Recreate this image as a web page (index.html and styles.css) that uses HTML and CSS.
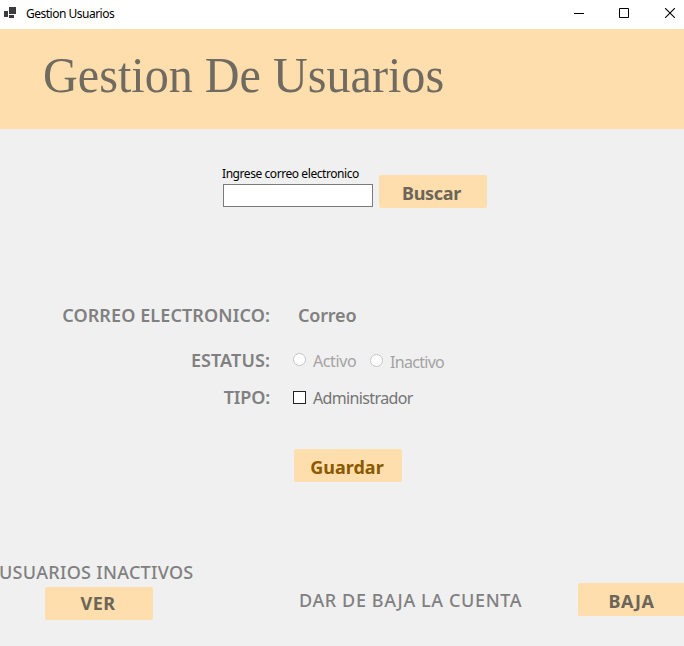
FILE: index.html
```html
<!DOCTYPE html>
<html lang="es">
<head>
<meta charset="utf-8">
<title>Gestion Usuarios</title>
<link rel="stylesheet" href="styles.css">
</head>
<body>
<div class="titlebar">
  <svg class="app-icon" width="14" height="12" viewBox="0 0 14 12" shape-rendering="crispEdges"><path fill="#3b3b3d" d="M0 4h4v6H0zM5 0h7v7H5zM5 8h5v3H5z"/></svg>
  <span class="window-name">Gestion Usuarios</span>
  <div class="controls">
    <svg width="10" height="10" viewBox="0 0 10 10"><path d="M0 5.5h10" stroke="#000"/></svg>
    <svg width="10" height="10" viewBox="0 0 10 10"><path d="M.5.5h9v9h-9z" fill="none" stroke="#000"/></svg>
    <svg class="close" width="10" height="10" viewBox="0 0 10 10"><path d="M0 0l10 10M10 0L0 10" stroke="#000" stroke-width="1.1"/></svg>
  </div>
</div>
<header class="banner"><h1>Gestion De Usuarios</h1></header>
<main>
  <form class="search">
    <label class="search-field"><span>Ingrese correo electronico</span><input type="text"></label>
    <button type="button" class="btn">Buscar</button>
  </form>
  <section class="details">
    <div class="row"><span class="key key-mail">CORREO ELECTRONICO:</span><span class="mail">Correo</span></div>
    <div class="row"><span class="key key-status">ESTATUS:</span>
      <div class="options"><span class="radio"></span><span class="off active">Activo</span><span class="radio second"></span><span class="off inactive">Inactivo</span></div>
    </div>
    <div class="row"><span class="key key-type">TIPO:</span>
      <div class="options"><span class="check"></span><span class="admin">Administrador</span></div>
    </div>
  </section>
  <button type="button" class="btn save">Guardar</button>
  <footer>
    <div class="inactive-users"><span class="caption users">USUARIOS INACTIVOS</span><button type="button" class="btn ver">VER</button></div>
    <div class="drop"><span class="caption account">DAR DE BAJA LA CUENTA</span><button type="button" class="btn baja">BAJA</button></div>
  </footer>
</main>
</body>
</html>
```
FILE: styles.css
```css
* { box-sizing: border-box; }
body { margin: 0; width: 684px; height: 646px; overflow: hidden; background: #f0f0f0; font-family: "Noto Sans", sans-serif; display: flex; flex-direction: column; }
.titlebar { height: 29px; background: #fff; display: flex; align-items: flex-start; padding: 0 9px 0 4px; }
.app-icon { margin-top: 7px; }
.window-name { font-size: 12px; line-height: 17px; margin: 5px 0 0 8px; color: #000; letter-spacing: -.5px; }
.controls { margin: 8px 0 0 auto; display: flex; gap: 35px; }
.controls svg { display: block; }
.controls .close { margin-left: 1px; }
.banner { height: 100px; background: #fddeac; padding: 17px 0 0 43px; }
h1 { margin: 0; font: 400 50px/58px "Liberation Serif", serif; color: #706b60; white-space: nowrap; transform: scaleX(.963); transform-origin: left; }
main { flex: 1; display: flex; flex-direction: column; }
.search { display: flex; align-items: flex-start; margin: 37px 0 0 222px; height: 50px; }
.search-field { width: 151px; font-size: 12px; line-height: 16px; display: flex; flex-direction: column; white-space: nowrap; letter-spacing: -.43px; }
.search-field input { margin: 2px 0 0 1px; width: 150px; height: 23px; border: 1px solid #7a7a7a; background: #fff; padding: 0; }
.btn { width: 108px; height: 33px; border: 0; border-radius: 2px; background: #fddeac; color: #6c6558; font: 700 18px/33px "Noto Sans", sans-serif; padding: 2px 0 0; white-space: nowrap; }
.search .btn { margin: 9px 0 0 6px; padding-right: 3px; letter-spacing: -.3px; }
.details { margin-top: 83px; display: flex; flex-direction: column; color: #808080; }
.row { display: grid; grid-template-columns: 270px 1fr; column-gap: 23px; height: 45px; line-height: 32px; }
.row:nth-child(2) { height: 37px; }
.row:nth-child(3) { height: 32px; }
.key { font-size: 18px; font-weight: 600; text-align: right; white-space: nowrap; }
.key-mail, .key-status { letter-spacing: .1px; }
.key-type { letter-spacing: -.15px; }
.mail { font-size: 18px; font-weight: 600; margin-left: 5px; letter-spacing: -.2px; }
.options { display: flex; font-size: 16px; line-height: 34px; }
.radio { width: 13px; height: 13px; border: 1px solid #c6c6c6; border-radius: 50%; background: #fff; margin: 9px 7px 0 0; }
.second { margin: 10px 7px 0 0; }
.off { color: #a3a3a3; }
.active { width: 57px; letter-spacing: -.4px; }
.inactive { padding-top: 1px; letter-spacing: -.7px; }
.check { width: 13px; height: 13px; border: 1px solid #222; background: #fff; margin: 10px 7px 0 0; }
.admin { color: #747474; letter-spacing: -.64px; }
.save { margin: 36px 0 0 294px; color: #8a5900; padding-right: 2px; }
footer { display: flex; align-items: flex-start; margin-top: 77px; }
.inactive-users { flex: 0 0 299px; display: flex; flex-direction: column; }
.caption { font-size: 18px; font-weight: 500; color: #808080; line-height: 27px; white-space: nowrap; }
.users { letter-spacing: .3px; margin-left: -1px; }
.ver { margin: 1px 0 0 45px; padding: 0 2px 0 0; letter-spacing: .5px; }
.drop { display: flex; flex: none; margin-top: 24px; }
.account { width: 279px; margin-top: 4px; letter-spacing: .62px; }
.baja { padding-right: 1px; letter-spacing: .6px; }
```
